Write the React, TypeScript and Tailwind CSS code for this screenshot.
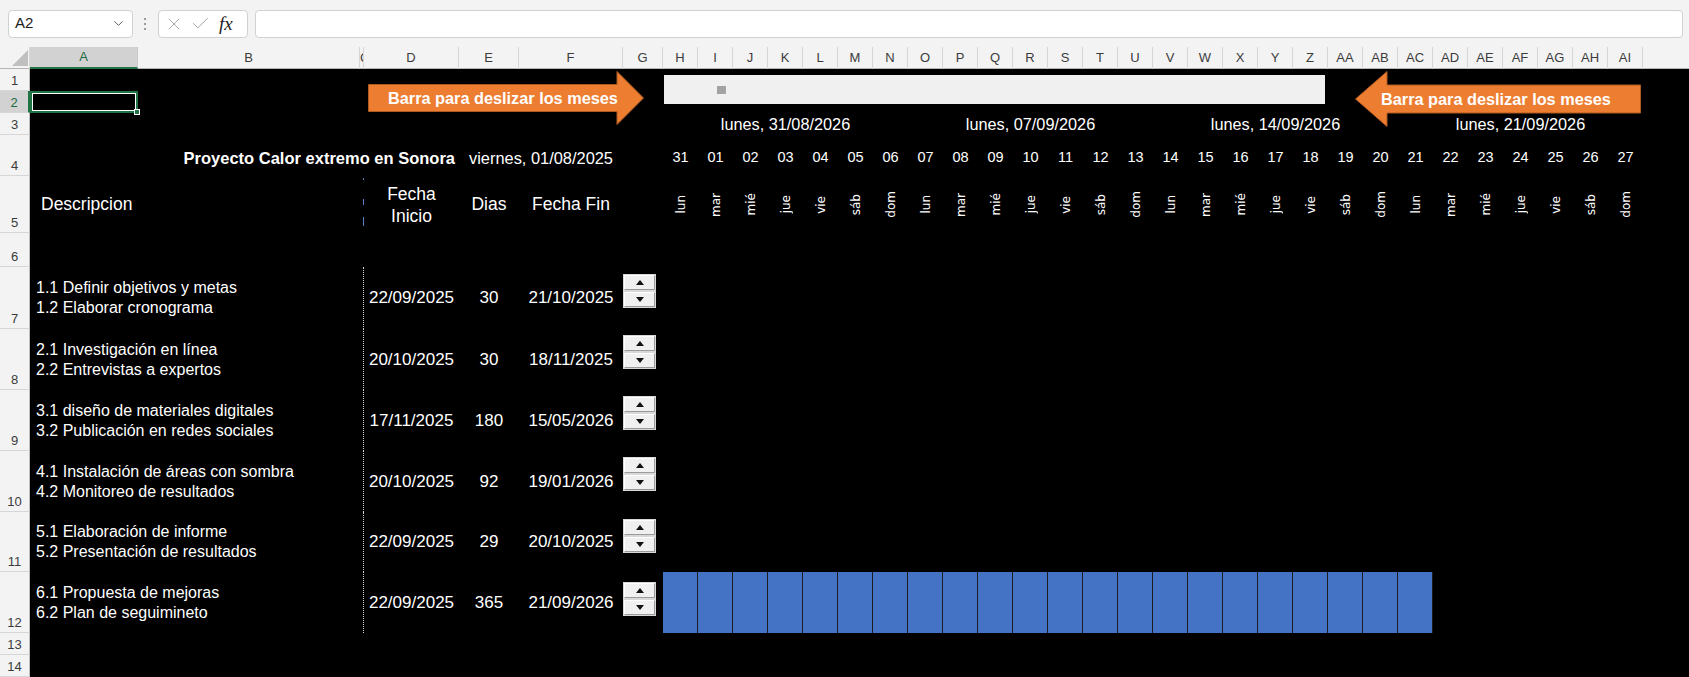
import React from "react";
import { ChevronDown, X, Check } from "lucide-react";

const G =
  "grid grid-cols-[30px_108px_222px_4px_95px_60px_104px_40px_repeat(28,35px)_1fr]";

const COLS = [
  "A","B","C","D","E","F","G","H","I","J","K","L","M","N","O","P","Q","R","S","T",
  "U","V","W","X","Y","Z","AA","AB","AC","AD","AE","AF","AG","AH","AI",
];

const NUMS = [
  "31","01","02","03","04","05","06","07","08","09","10","11","12","13",
  "14","15","16","17","18","19","20","21","22","23","24","25","26","27",
];

const WEEK = ["lun", "mar", "mié", "jue", "vie", "sáb", "dom"];
const DAYS = [...WEEK, ...WEEK, ...WEEK, ...WEEK];

const TASKS = [
  { n: 7, h: "h-[62px]", l1: "1.1 Definir objetivos y metas", l2: "1.2 Elaborar cronograma", ini: "22/09/2025", dias: "30", fin: "21/10/2025", pt: "pt-[8px]", bar: 0 },
  { n: 8, h: "h-[61px]", l1: "2.1 Investigación en línea", l2: "2.2 Entrevistas a expertos", ini: "20/10/2025", dias: "30", fin: "18/11/2025", pt: "pt-[7px]", bar: 0 },
  { n: 9, h: "h-[61px]", l1: "3.1 diseño de materiales digitales", l2: "3.2 Publicación en redes sociales", ini: "17/11/2025", dias: "180", fin: "15/05/2026", pt: "pt-[7px]", bar: 0 },
  { n: 10, h: "h-[61px]", l1: "4.1 Instalación de áreas con sombra", l2: "4.2 Monitoreo de resultados", ini: "20/10/2025", dias: "92", fin: "19/01/2026", pt: "pt-[7px]", bar: 0 },
  { n: 11, h: "h-[60px]", l1: "5.1 Elaboración de informe", l2: "5.2 Presentación de resultados", ini: "22/09/2025", dias: "29", fin: "20/10/2025", pt: "pt-[8px]", bar: 0 },
  { n: 12, h: "h-[61px]", l1: "6.1 Propuesta de mejoras", l2: "6.2 Plan de seguimineto", ini: "22/09/2025", dias: "365", fin: "21/09/2026", pt: "pt-[11px]", bar: 22 },
];

function RowHead({ n, selected, className = "" }: { n: number; selected?: boolean; className?: string }) {
  return (
    <div
      className={
        "flex items-end justify-center pb-[3px] text-[13px] leading-none border-b border-[#d6d6d6] " +
        (selected
          ? "bg-[#d2d2d2] text-[#1e6b41] border-r-2 border-r-[#217346] "
          : "bg-[#f3f3f3] text-[#3b3b3b] border-r border-r-[#bdbdbd] ") +
        className
      }
    >
      {n}
    </div>
  );
}

function SpinBtn({ up }: { up?: boolean }) {
  return (
    <div className="w-[31px] h-[15px] bg-[#f0f0f0] border border-t-white border-l-white border-b-[#9a9a9a] border-r-[#9a9a9a] flex items-center justify-center shadow-[0_0_0_1px_#d8d8d8]">
      <svg width="8" height="5" viewBox="0 0 8 5">
        <path d={up ? "M0 5 L4 0 L8 5 Z" : "M0 0 L8 0 L4 5 Z"} fill="#111" />
      </svg>
    </div>
  );
}

function ArrowRight() {
  return (
    <div className="relative ml-[4px] mt-[2px] w-[276px] h-[54px] flex items-center pl-[20px]">
      <svg className="absolute inset-0" width="276" height="54" viewBox="0 0 276 54">
        <path
          d="M0.5 13.5 H249 V0.5 L275.5 27 L249 53.5 V40.5 H0.5 Z"
          fill="#ed7d31"
          stroke="#ae5a21"
          strokeWidth="1"
        />
      </svg>
      <span className="relative text-white font-bold text-[16.3px] whitespace-nowrap leading-none">
        Barra para deslizar los meses
      </span>
    </div>
  );
}

function ArrowLeft() {
  return (
    <div className="relative ml-[27px] mt-[2px] w-[286px] h-[56px] flex items-center pl-[26px]">
      <svg className="absolute inset-0" width="286" height="56" viewBox="0 0 286 56">
        <path
          d="M285.5 14 H32 V0.5 L0.5 28 L32 55.5 V42 H285.5 Z"
          fill="#ed7d31"
          stroke="#ae5a21"
          strokeWidth="1"
        />
      </svg>
      <span className="relative text-white font-bold text-[16.3px] whitespace-nowrap leading-none">
        Barra para deslizar los meses
      </span>
    </div>
  );
}

export default function App() {
  return (
    <div className="w-[1689px] h-[677px] overflow-hidden bg-black font-['Liberation_Sans',Arial,sans-serif]">
      {/* Formula bar */}
      <div className="h-[47px] bg-[#f3f3f3] flex items-center">
        <div className="ml-[8px] w-[125px] h-[28px] bg-white border border-[#d1d1d1] rounded-[4px] flex items-center justify-between pl-[6px] pr-[6px]">
          <span className="text-[15px] text-[#222]">A2</span>
          <ChevronDown size={15} strokeWidth={1.5} color="#555" />
        </div>
        <div className="ml-[11px] flex flex-col gap-[3px]">
          <div className="w-[2px] h-[2px] bg-[#9a9a9a]" />
          <div className="w-[2px] h-[2px] bg-[#9a9a9a]" />
          <div className="w-[2px] h-[2px] bg-[#9a9a9a]" />
        </div>
        <div className="ml-[12px] w-[90px] h-[28px] bg-white border border-[#d1d1d1] rounded-[4px] flex items-center pl-[5px] gap-[6px]">
          <X size={20} strokeWidth={1.1} color="#a0a0a0" />
          <Check size={21} strokeWidth={1.1} color="#a0a0a0" />
          <span className="ml-[2px] font-['Liberation_Serif',serif] italic text-[19px] text-[#222] leading-none">
            fx
          </span>
        </div>
        <div className="ml-[7px] mr-[6px] flex-1 h-[28px] bg-white border border-[#d1d1d1] rounded-[4px]" />
      </div>

      {/* Column headers */}
      <div className={`${G} h-[22px] bg-[#f3f3f3] border-b border-[#b5b5b5]`}>
        <div className="relative border-r border-[#d6d6d6]">
          <svg className="absolute inset-0" width="30" height="22" viewBox="0 0 30 22">
            <path d="M28 3 L28 19 L12 19 Z" fill="#c0c0c0" />
          </svg>
        </div>
        {COLS.map((c) =>
          c === "A" ? (
            <div
              key={c}
              className="flex items-center justify-center text-[13px] text-[#1e6b41] bg-[#d2d2d2] border-b-2 border-[#217346] border-r border-r-[#c8c8c8]"
            >
              {c}
            </div>
          ) : c === "C" ? (
            <div key={c} className="flex items-center overflow-hidden text-[13px] text-[#3b3b3b] border-r border-[#d6d6d6]">
              {c}
            </div>
          ) : (
            <div key={c} className="flex items-center justify-center text-[13px] text-[#3b3b3b] border-r border-[#d6d6d6]">
              {c}
            </div>
          )
        )}
        <div />
      </div>

      {/* Rows 1-3 */}
      <div className={`${G} grid-rows-[22px_22px_22px] text-white`}>
        <RowHead n={1} className="col-start-1 row-start-1" />
        <RowHead n={2} selected className="col-start-1 row-start-2" />
        <RowHead n={3} className="col-start-1 row-start-3" />
        <div className="col-start-2 row-start-2 relative border-2 border-[#217346] shadow-[inset_0_0_0_1px_#ffffff]">
          <div className="absolute -right-[4px] -bottom-[4px] w-[6px] h-[6px] bg-[#217346] border border-white" />
        </div>
        <div className="col-start-5 col-span-4 row-start-1 row-span-3">
          <ArrowRight />
        </div>
        <div className="col-start-9 col-span-19 row-start-1 row-span-2">
          <div className="ml-[1px] mr-[3px] mt-[6px] h-[29px] bg-[#f0f0f0] flex items-center pl-[53px]">
            <div className="w-[9px] h-[8px] bg-[#a3a3a3]" />
          </div>
        </div>
        <div className="col-start-28 col-span-9 row-start-1 row-span-3">
          <ArrowLeft />
        </div>
        <div className="col-start-9 col-span-7 row-start-3 flex items-center justify-center text-[16.3px] whitespace-nowrap">
          lunes, 31/08/2026
        </div>
        <div className="col-start-16 col-span-7 row-start-3 flex items-center justify-center text-[16.3px] whitespace-nowrap">
          lunes, 07/09/2026
        </div>
        <div className="col-start-23 col-span-7 row-start-3 flex items-center justify-center text-[16.3px] whitespace-nowrap">
          lunes, 14/09/2026
        </div>
        <div className="col-start-30 col-span-7 row-start-3 flex items-center justify-center text-[16.3px] whitespace-nowrap">
          lunes, 21/09/2026
        </div>
      </div>

      {/* Row 4 */}
      <div className={`${G} h-[41px] text-white`}>
        <RowHead n={4} />
        <div className="col-span-4 flex items-center justify-end pr-[4px] pt-[5px] font-bold text-[16.5px] whitespace-nowrap">
          Proyecto Calor extremo en Sonora
        </div>
        <div className="col-span-2 flex items-center justify-center pt-[5px] text-[16.4px] whitespace-nowrap">
          viernes, 01/08/2025
        </div>
        <div />
        {NUMS.map((n, i) => (
          <div key={i} className="flex items-center justify-center pt-[5px] text-[14.5px]">
            {n}
          </div>
        ))}
        <div />
      </div>

      {/* Row 5 */}
      <div className={`${G} h-[57px] text-white`}>
        <RowHead n={5} />
        <div className="flex items-center pl-[11px] text-[17.5px] whitespace-nowrap">Descripcion</div>
        <div />
        <div className="flex flex-col items-end">
          <div className="mt-[2px] w-[1px] h-[2px] bg-[#5b7fc7]" />
          <div className="mt-[19px] w-[1px] h-[6px] bg-[#5b7fc7]" />
          <div className="mt-[12px] w-[1px] h-[9px] bg-[#5b7fc7]" />
        </div>
        <div className="flex items-center justify-center text-center text-[17.5px] leading-[22px]">
          Fecha
          <br />
          Inicio
        </div>
        <div className="flex items-center justify-center text-[17.5px]">Dias</div>
        <div className="flex items-center justify-center text-[17.5px] whitespace-nowrap">Fecha Fin</div>
        <div />
        {DAYS.map((d, i) => (
          <div key={i} className="flex items-center justify-center">
            <span className="[writing-mode:vertical-rl] rotate-180 font-['DejaVu_Sans',sans-serif] text-[12px] leading-none">
              {d}
            </span>
          </div>
        ))}
        <div />
      </div>

      {/* Row 6 */}
      <div className={`${G} h-[34px]`}>
        <RowHead n={6} />
      </div>

      {/* Task rows 7-12 */}
      {TASKS.map((t) => (
        <div key={t.n} className={`${G} ${t.h} text-white`}>
          <RowHead n={t.n} />
          <div className="flex flex-col justify-center pl-[6px] text-[16px] leading-[20px] whitespace-nowrap">
            <span>{t.l1}</span>
            <span>{t.l2}</span>
          </div>
          <div />
          <div className="border-r border-dotted border-[#d0d0d0]" />
          <div className="flex items-center justify-center text-[17px]">{t.ini}</div>
          <div className="flex items-center justify-center text-[17px]">{t.dias}</div>
          <div className="flex items-center justify-center text-[17px]">{t.fin}</div>
          <div className={`flex flex-col gap-[2px] pl-[1px] ${t.pt}`}>
            <SpinBtn up />
            <SpinBtn />
          </div>
          {NUMS.map((_, i) =>
            i < t.bar ? (
              <div key={i} className="bg-[#4472c4] border-r border-[#1c1c1c]" />
            ) : (
              <div key={i} />
            )
          )}
          <div />
        </div>
      ))}

      {/* Rows 13-14 */}
      <div className={`${G} h-[22px]`}>
        <RowHead n={13} />
      </div>
      <div className={`${G} h-[22px]`}>
        <RowHead n={14} />
      </div>
    </div>
  );
}
